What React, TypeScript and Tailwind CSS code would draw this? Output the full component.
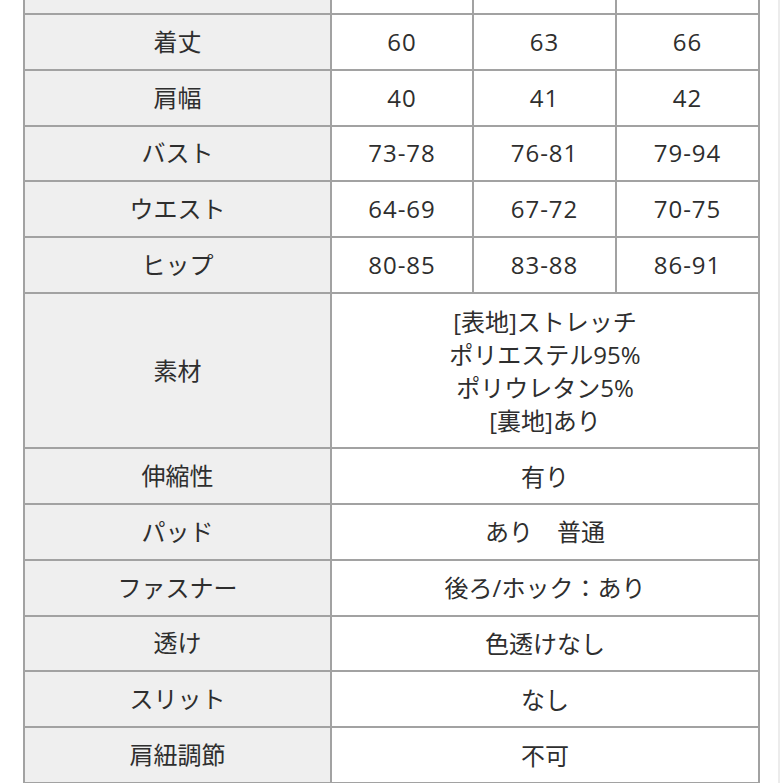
import React from "react";

type Row = { label: string; values?: string[]; span?: string[]; tall?: boolean };

// 最上段（見出し行）は画面外に切れているので中身は空
const rows: Row[] = [
  { label: "", values: ["", "", ""] },
  { label: "着丈", values: ["60", "63", "66"] },
  { label: "肩幅", values: ["40", "41", "42"] },
  { label: "バスト", values: ["73-78", "76-81", "79-94"] },
  { label: "ウエスト", values: ["64-69", "67-72", "70-75"] },
  { label: "ヒップ", values: ["80-85", "83-88", "86-91"] },
  {
    label: "素材",
    span: ["[表地]ストレッチ", "ポリエステル95%", "ポリウレタン5%", "[裏地]あり"],
    tall: true,
  },
  { label: "伸縮性", span: ["有り"] },
  { label: "パッド", span: ["あり\u3000普通"] },
  { label: "ファスナー", span: ["後ろ/ホック：あり"] },
  { label: "透け", span: ["色透けなし"] },
  { label: "スリット", span: ["なし"] },
  { label: "肩紐調節", span: ["不可"] },
];

const font = {
  fontFamily: '"Open Sans", "Noto Sans CJK JP", sans-serif',
};

export default function App() {
  return (
    <div className="w-[783px] h-[783px] overflow-hidden bg-white relative" style={font}>
      <div className="absolute top-0 bottom-0 left-[778px] w-[2px] bg-[#ececec]" />
      <div className="pl-[23px] mt-[-42.8px]">
        <div className="w-[737px] grid grid-cols-[305px_140px_141px_141px] gap-[2px] p-[2px] bg-[#a2a2a2] text-[24px] text-[#2e2e2e]">
          {rows.map((r, idx) => (
            <React.Fragment key={idx}>
              <div
                className={`bg-[#efefef] flex items-center justify-center ${
                  r.tall ? "h-[153.2px]" : "h-[53.8px]"
                }`}
              >
                {r.label}
              </div>
              {r.values ? (
                r.values.map((v, i) => (
                  <div key={i} className="bg-white flex items-center justify-center tracking-[1px]">
                    {v}
                  </div>
                ))
              ) : (
                <div className="col-span-3 bg-white flex flex-col items-center justify-center leading-[33px]">
                  {r.span!.map((s) => (
                    <span key={s}>{s}</span>
                  ))}
                </div>
              )}
            </React.Fragment>
          ))}
        </div>
      </div>
    </div>
  );
}
